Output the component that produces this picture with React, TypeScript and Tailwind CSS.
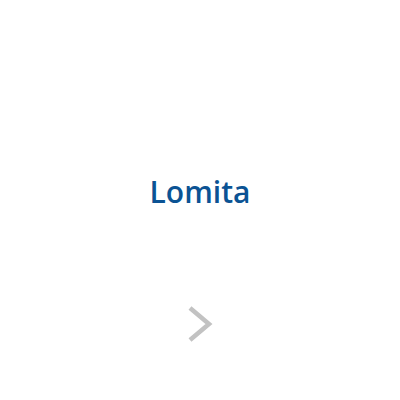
const App: React.FC = () => {
  return (
    <div className="flex flex-col items-center w-[400px] h-[400px] bg-white pt-[171px]">
      <h1
        className="text-[30px] leading-[42px] font-semibold text-[#0b5394]"
        style={{ fontFamily: '"Open Sans", sans-serif' }}
      >
        Lomita
      </h1>
      <div className="mt-[92px]">
        <svg width="28" height="38" viewBox="0 0 28 38" fill="none">
          <path
            d="M4 3 L23 19 L4 35"
            stroke="#c2c2c2"
            strokeWidth="4.5"
          />
        </svg>
      </div>
    </div>
  );
};

export default App;
